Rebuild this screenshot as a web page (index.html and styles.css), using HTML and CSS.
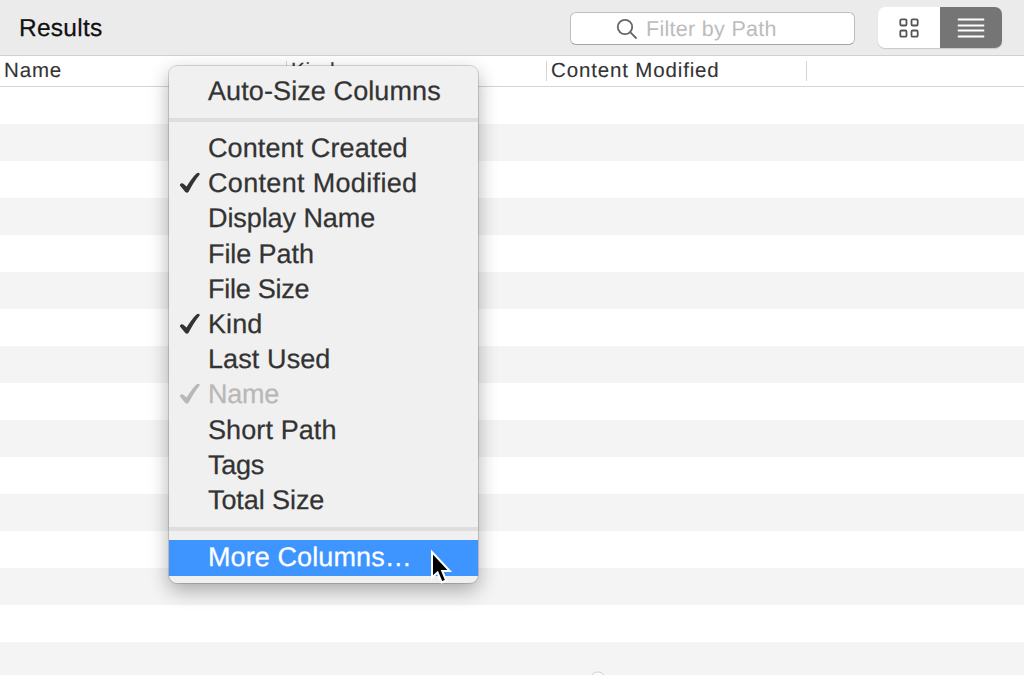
FILE: index.html
```html
<!DOCTYPE html>
<html lang="en">
<head>
<meta charset="utf-8">
<title>Results</title>
<link rel="stylesheet" href="styles.css">
</head>
<body>
<svg class="symbols" width="0" height="0">
  <symbol id="check" viewBox="0 0 22 22"><path d="M.8 13.2C1.5 11.2 3.2 10.7 4.7 12L7.6 14.6C10.4 9.7 14 4.6 17.8 1.2Q20.9 -.2 20.7 2.6C16.4 8 12.8 13.7 9.6 19.8Q8.2 21.4 6.3 20Z"/></symbol>
</svg>
<main class="window">
  <header class="toolbar">
    <h1 class="title">Results</h1>
    <div class="search">
      <svg class="search-icon" viewBox="0 0 22 22"><circle cx="9" cy="9" r="7.2"/><path d="M14.2 14.2L20 20"/></svg>
      <span class="placeholder">Filter by Path</span>
    </div>
    <div class="switch">
      <div class="segment">
        <svg class="grid-icon" viewBox="0 0 20 20"><rect x="1.3" y="1.3" width="6.2" height="6.2" rx="1.3"/><rect x="12.5" y="1.3" width="6.2" height="6.2" rx="1.3"/><rect x="1.3" y="12.5" width="6.2" height="6.2" rx="1.3"/><rect x="12.5" y="12.5" width="6.2" height="6.2" rx="1.3"/></svg>
      </div>
      <div class="segment active">
        <svg class="list-icon" viewBox="0 0 28 20"><path d="M1.5 1.5H26.5M1.5 7.5H26.5M1.5 12.5H26.5M1.5 18.5H26.5"/></svg>
      </div>
    </div>
  </header>
  <div class="columns">
    <div class="column name">Name</div>
    <div class="column kind">Kind</div>
    <div class="column modified">Content Modified</div>
  </div>
  <div class="rows"></div>
</main>
<svg class="spinner" viewBox="0 0 16 5"><path d="M2 5C4 1 11 1 14 5"/></svg>
<div class="menu">
  <div class="item first">Auto-Size Columns</div>
  <div class="separator"></div>
  <div class="group">
    <div class="item">Content Created</div>
    <div class="item loose"><svg class="check"><use href="#check"/></svg>Content Modified</div>
    <div class="item tight">Display Name</div>
    <div class="item tight">File Path</div>
    <div class="item tighter">File Size</div>
    <div class="item"><svg class="check"><use href="#check"/></svg>Kind</div>
    <div class="item">Last Used</div>
    <div class="item disabled tighter"><svg class="check"><use href="#check"/></svg>Name</div>
    <div class="item">Short Path</div>
    <div class="item tighter">Tags</div>
    <div class="item tight">Total Size</div>
  </div>
  <div class="separator"></div>
  <div class="item selected">More Columns…</div>
</div>
<svg class="pointer" viewBox="0 0 24 36"><path d="M2 3V28.5L7.5 23.5L11.7 33.5L16.2 31.5L12.2 22H19.8Z"/></svg>
</body>
</html>
```

FILE: styles.css
```css
* { box-sizing: border-box; }
body {
  margin: 0;
  overflow: hidden;
  font-family: "Liberation Sans", Arial, sans-serif;
  color: #333;
  text-rendering: geometricPrecision;
  -webkit-text-stroke-width: .25px;
}
.symbols { position: absolute; }
.window {
  display: flex;
  flex-direction: column;
  height: 675px;
  background: #fff;
}
.toolbar {
  display: flex;
  align-items: center;
  height: 56px;
  flex: none;
  padding: 0 22px 0 19px;
  background: #ebebeb;
  border-bottom: 1px solid #d0d0d0;
}
.title {
  margin: 0 auto 0 0;
  padding-top: 3px;
  font-size: 24.5px;
  font-weight: 400;
  letter-spacing: .25px;
  color: #111;
}
.search {
  display: flex;
  align-items: center;
  width: 285px;
  height: 33px;
  padding-left: 45px;
  margin: 1px 23px 0 0;
  background: #fff;
  border: 1px solid #bdbdbd;
  border-bottom-color: #a5a5a5;
  border-radius: 6px;
  font-size: 21.5px;
  letter-spacing: .3px;
  color: #bcbcbc;
}
.placeholder {
  padding-top: 3px;
  -webkit-text-stroke-width: 0;
}
.search-icon {
  width: 22px;
  height: 22px;
  margin-right: 8px;
  margin-top: 2px;
  fill: none;
  stroke: #666;
  stroke-width: 1.8;
  stroke-linecap: round;
}
.switch {
  display: flex;
  width: 124px;
  height: 41px;
  border-radius: 7px;
  overflow: hidden;
  background: #fff;
  box-shadow: 0 1px 1px #c9c9c9;
}
.segment {
  display: flex;
  flex: 1;
  align-items: center;
  justify-content: center;
}
.segment.active { background: #757575; }
.grid-icon {
  width: 20px;
  height: 20px;
  fill: none;
  stroke: #555;
  stroke-width: 1.8;
}
.list-icon {
  width: 28px;
  height: 20px;
  stroke: #fff;
  stroke-width: 1.8;
  stroke-linecap: round;
}
.columns {
  display: flex;
  align-items: center;
  flex: none;
  height: 31px;
  border-bottom: 1px solid #d4d4d4;
  font-size: 20.5px;
  letter-spacing: .85px;
  -webkit-text-stroke-width: .1px;
}
.column {
  height: 20px;
  line-height: 20px;
  padding-left: 4px;
  border-right: 1px solid #d5d5d5;
}
.name { width: 287px; }
.kind { width: 260px; }
.modified { width: 260px; }
.rows {
  flex: 1;
  background: repeating-linear-gradient(#fff 0 37px, #f4f4f4 37px 74px);
}
.menu {
  position: absolute;
  left: 169px;
  top: 66px;
  width: 309px;
  height: 517px;
  background: #f0f0f0;
  border-radius: 8px;
  box-shadow: 0 0 0 1px rgba(0, 0, 0, .14), 0 7px 20px rgba(0, 0, 0, .32);
  font-size: 27px;
  letter-spacing: .1px;
}
.item {
  position: relative;
  height: 35.2px;
  line-height: 36px;
  padding-left: 39px;
  white-space: nowrap;
}
.loose { letter-spacing: .33px; }
.tight { letter-spacing: -.08px; }
.tighter { letter-spacing: -.25px; }
.first {
  height: 52px;
  line-height: 50px;
}
.separator {
  height: 4px;
  background: #dedede;
}
.group {
  height: 405px;
  padding-top: 8px;
}
.check {
  position: absolute;
  left: 10px;
  top: 7px;
  width: 22px;
  height: 22px;
  fill: #333;
}
.disabled { color: #b8b8b8; }
.disabled .check { fill: #b8b8b8; }
.selected {
  height: 36px;
  line-height: 34px;
  margin-top: 9px;
  background: #3e95ff;
  color: #fff;
}
.spinner {
  position: absolute;
  left: 590px;
  top: 670px;
  width: 16px;
  height: 5px;
  fill: #fafafa;
  stroke: #d0d0d0;
}
.pointer {
  position: absolute;
  left: 430px;
  top: 549px;
  width: 24px;
  height: 36px;
  fill: #000;
  stroke: #fff;
  stroke-width: 2;
}
```
